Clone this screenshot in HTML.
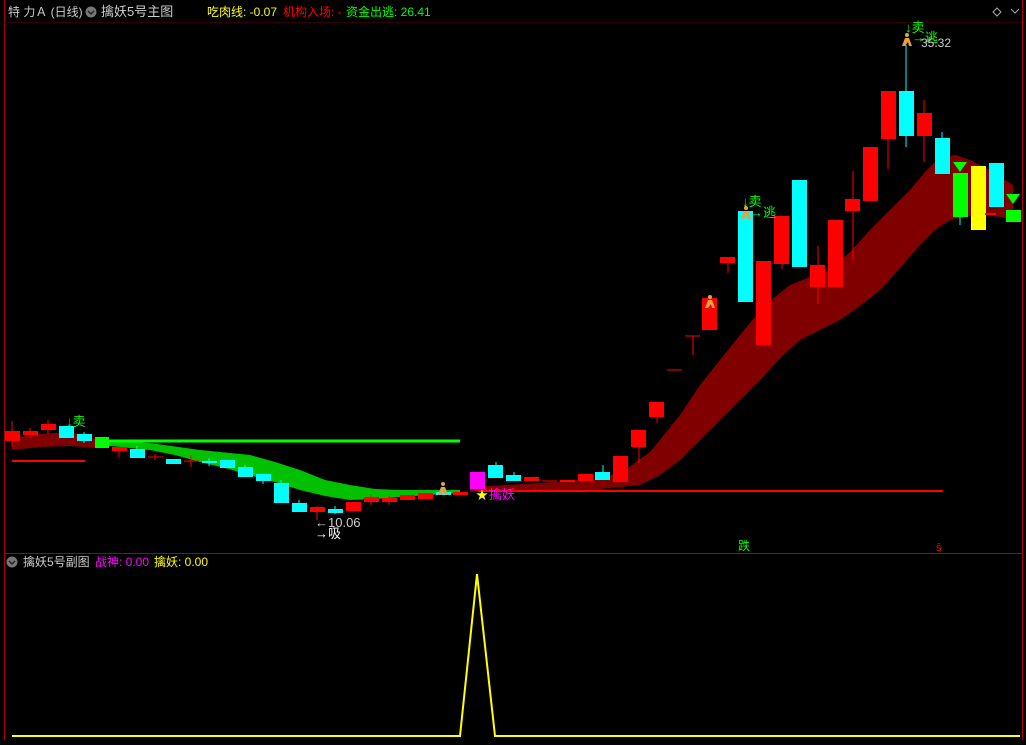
<!DOCTYPE html>
<html><head><meta charset="utf-8"><style>
body{margin:0;background:#000;width:1026px;height:740px;overflow:hidden;font-family:"Liberation Sans","Noto Sans CJK SC",sans-serif;}
svg text{font-family:"Liberation Sans","Noto Sans CJK SC",sans-serif;}
</style></head><body>
<svg width="1026" height="740" viewBox="0 0 1026 740" xmlns="http://www.w3.org/2000/svg">
<rect width="1026" height="740" fill="#000"/>
<line x1="4.5" y1="0" x2="4.5" y2="740" stroke="#a00" />
<line x1="1022.5" y1="0" x2="1022.5" y2="740" stroke="#a00" />
<line x1="4" y1="553.5" x2="1022" y2="553.5" stroke="#a00" />
<line x1="4" y1="22.5" x2="1022" y2="22.5" stroke="#300" />
<text x="8" y="16" fill="#ccc" font-size="12">特 力Ａ (日线)</text>
<circle cx="91" cy="12" r="5.5" fill="#777"/><path d="M88 11l3 3 3-3" stroke="#222" stroke-width="1.5" fill="none"/>
<text x="101" y="16" fill="#ccc" font-size="13">擒妖5号主图</text>
<text x="207" y="16" fill="#ff0" font-size="12">吃肉线: -0.07</text>
<text x="283" y="16" fill="#f00" font-size="12">机构入场: -</text>
<text x="346" y="16" fill="#0f0" font-size="12">资金出逃: 26.41</text>
<path d="M997 8l4 4-4 4-4-4z" stroke="#aaa" fill="none"/>
<path d="M1011 9l4 4 4-4" stroke="#aaa" fill="none"/>
<polygon points="12,438 40,434 70,432 100,440 100,448 70,446 40,447 12,450" fill="#800000"/>
<polygon points="470,487 540,483 600,479 625,470 650,452 680,415 700,385 720,360 740,335 765,305 790,285 810,277 830,270 850,252 870,230 890,210 910,190 925,172 940,157 955,155 970,160 990,170 1013,185 1013,220 995,216 980,215 965,217 950,220 935,230 920,245 900,268 880,290 860,306 840,320 820,330 800,340 780,358 760,380 740,400 720,420 700,440 680,460 660,475 640,485 600,489 540,490 470,492" fill="#800000"/>
<polygon points="100,440 150,443 200,450 250,455 275,462 300,470 325,480 350,485 375,489 400,490 460,490 460,493 400,497 375,499 350,500 325,496 300,490 275,482 250,475 225,468 200,462 175,455 150,450 100,445" fill="#00c000"/>
<line x1="95" y1="441" x2="460" y2="441" stroke="#0f0" stroke-width="3"/>
<line x1="12" y1="461" x2="85" y2="461" stroke="#f00" stroke-width="2"/>
<line x1="478" y1="491" x2="943" y2="491" stroke="#f00" stroke-width="2"/>
<g stroke-width="1">
<line x1="12" y1="421" x2="12" y2="447" stroke="#f00"/><rect x="5" y="431" width="15" height="10" fill="#f00"/>
<rect x="23" y="431" width="15" height="4" fill="#f00"/><line x1="30" y1="428" x2="30" y2="438" stroke="#f00"/>
<line x1="48" y1="420" x2="48" y2="434" stroke="#f00"/><rect x="41" y="424" width="15" height="6" fill="#f00"/>
<rect x="59" y="426" width="15" height="12" fill="#0ff"/>
<line x1="84" y1="432" x2="84" y2="443" stroke="#0ff"/><rect x="77" y="434" width="15" height="7" fill="#0ff"/>
<rect x="95" y="437" width="14" height="11" fill="#0f0"/>
<line x1="119" y1="447" x2="119" y2="457" stroke="#f00"/><rect x="112" y="447" width="15" height="4" fill="#f00"/>
<line x1="137" y1="446" x2="137" y2="458" stroke="#0ff"/><rect x="130" y="449" width="15" height="9" fill="#0ff"/>
<line x1="148" y1="457" x2="163" y2="457" stroke="#f00"/><line x1="155" y1="454" x2="155" y2="460" stroke="#f00"/>
<rect x="166" y="459" width="15" height="5" fill="#0ff"/>
<line x1="184" y1="461" x2="199" y2="461" stroke="#f00"/><line x1="191" y1="455" x2="191" y2="467" stroke="#f00"/>
<rect x="202" y="461" width="15" height="2" fill="#0ff"/><line x1="209" y1="458" x2="209" y2="466" stroke="#0ff"/>
<rect x="220" y="460" width="15" height="8" fill="#0ff"/>
<line x1="245" y1="465" x2="245" y2="477" stroke="#0ff"/><rect x="238" y="467" width="15" height="10" fill="#0ff"/>
<line x1="263" y1="474" x2="263" y2="484" stroke="#0ff"/><rect x="256" y="474" width="15" height="7" fill="#0ff"/>
<line x1="281" y1="480" x2="281" y2="503" stroke="#0ff"/><rect x="274" y="483" width="15" height="20" fill="#0ff"/>
<line x1="299" y1="500" x2="299" y2="512" stroke="#0ff"/><rect x="292" y="503" width="15" height="9" fill="#0ff"/>
<line x1="317" y1="506" x2="317" y2="520" stroke="#f00"/><rect x="310" y="507" width="15" height="5" fill="#f00"/>
<line x1="335" y1="506" x2="335" y2="514" stroke="#0ff"/><rect x="328" y="509" width="15" height="4" fill="#0ff"/>
<rect x="346" y="502" width="15" height="9" fill="#f00"/>
<line x1="371" y1="495" x2="371" y2="505" stroke="#f00"/><rect x="364" y="497" width="15" height="5" fill="#f00"/>
<line x1="389" y1="496" x2="389" y2="505" stroke="#f00"/><rect x="382" y="498" width="15" height="4" fill="#f00"/>
<rect x="400" y="495" width="15" height="5" fill="#f00"/>
<rect x="418" y="493" width="15" height="6" fill="#f00"/>
<rect x="436" y="492" width="15" height="3" fill="#0ff"/>
<rect x="453" y="492" width="15" height="3" fill="#f00"/>
<rect x="470" y="472" width="15" height="17" fill="#f0f"/>
<line x1="496" y1="462" x2="496" y2="478" stroke="#0ff"/><rect x="488" y="465" width="15" height="13" fill="#0ff"/>
<line x1="514" y1="472" x2="514" y2="481" stroke="#0ff"/><rect x="506" y="475" width="15" height="6" fill="#0ff"/>
<rect x="524" y="477" width="15" height="4" fill="#f00"/>
<line x1="542" y1="481" x2="557" y2="481" stroke="#f00"/>
<rect x="560" y="480" width="15" height="2" fill="#f00"/>
<rect x="578" y="474" width="15" height="7" fill="#f00"/>
<line x1="603" y1="465" x2="603" y2="480" stroke="#0ff"/><rect x="595" y="472" width="15" height="8" fill="#0ff"/>
<rect x="613" y="456" width="15" height="26" fill="#f00"/>
<line x1="639" y1="430" x2="639" y2="463" stroke="#f00"/><rect x="631" y="430" width="15" height="17" fill="#f00"/>
<line x1="657" y1="402" x2="657" y2="423" stroke="#f00"/><rect x="649" y="402" width="15" height="15" fill="#f00"/>
<line x1="667" y1="370" x2="682" y2="370" stroke="#f00"/>
<line x1="685" y1="336" x2="700" y2="336" stroke="#f00"/><line x1="693" y1="336" x2="693" y2="355" stroke="#f00"/>
<rect x="702" y="298" width="15" height="32" fill="#f00"/>
<line x1="728" y1="257" x2="728" y2="273" stroke="#f00"/><rect x="720" y="257" width="15" height="6" fill="#f00"/>
<rect x="738" y="211" width="15" height="91" fill="#0ff"/>
<rect x="756" y="261" width="15" height="84" fill="#f00"/>
<line x1="782" y1="216" x2="782" y2="269" stroke="#f00"/><rect x="774" y="216" width="15" height="48" fill="#f00"/>
<rect x="792" y="180" width="15" height="87" fill="#0ff"/>
<line x1="818" y1="246" x2="818" y2="304" stroke="#f00"/><rect x="810" y="265" width="15" height="22" fill="#f00"/>
<rect x="828" y="220" width="15" height="67" fill="#f00"/>
<line x1="853" y1="171" x2="853" y2="260" stroke="#f00"/><rect x="845" y="199" width="15" height="12" fill="#f00"/>
<rect x="863" y="147" width="15" height="54" fill="#f00"/>
<line x1="888" y1="91" x2="888" y2="169" stroke="#f00"/><rect x="881" y="91" width="15" height="48" fill="#f00"/>
<line x1="906" y1="45" x2="906" y2="147" stroke="#0ff"/><rect x="899" y="91" width="15" height="45" fill="#0ff"/>
<line x1="924" y1="100" x2="924" y2="162" stroke="#f00"/><rect x="917" y="113" width="15" height="23" fill="#f00"/>
<line x1="942" y1="132" x2="942" y2="174" stroke="#0ff"/><rect x="935" y="138" width="15" height="36" fill="#0ff"/>
<line x1="960" y1="173" x2="960" y2="225" stroke="#0ff"/><rect x="953" y="173" width="15" height="44" fill="#0f0"/>
<polygon points="953,162 967,162 960,172" fill="#0f0"/>
<rect x="971" y="166" width="15" height="64" fill="#ff0"/>
<rect x="989" y="163" width="15" height="44" fill="#0ff"/>
<line x1="985" y1="214" x2="996" y2="214" stroke="#f00" stroke-width="2"/>
<rect x="1006" y="210" width="15" height="12" fill="#0f0"/>
<polygon points="1006,194 1020,194 1013,204" fill="#0f0"/>
</g>
<text x="66" y="426" fill="#0f0" font-size="13">↓卖</text>
<text x="315" y="527" fill="#ccc" font-size="13">←10.06</text>
<text x="315" y="538" fill="#fff" font-size="13">→吸</text>
<text x="476" y="499" fill="#ff0" font-size="12">★</text><text x="489" y="499" fill="#f0f" font-size="13">擒妖</text>
<text x="742" y="206" fill="#0f0" font-size="13">↓卖</text><text x="750" y="217" fill="#0f0" font-size="13">→逃</text>
<text x="905" y="32" fill="#0f0" font-size="13">↓卖</text><text x="912" y="42" fill="#0f0" font-size="13">→逃</text>
<text x="921" y="47" fill="#ccc" font-size="12">35.32</text>
<g fill="#e8a040">
<circle cx="443" cy="484" r="2"/><path d="M441 487h4l3 8h-3l-1-4-3 4h-3z"/>
<circle cx="710" cy="297" r="2"/><path d="M708 300h4l3 8h-3l-1-4-3 4h-3z"/>
<circle cx="746" cy="208" r="2"/><path d="M744 211h4l3 8h-3l-1-4-3 4h-3z"/>
<circle cx="907" cy="35" r="2"/><path d="M905 38h4l3 8h-3l-1-4-3 4h-3z"/>
</g>
<text x="738" y="550" fill="#0f0" font-size="12">跌</text>
<text x="936" y="551" fill="#f00" font-size="11">ŝ</text>
<circle cx="12" cy="562" r="5.5" fill="#777"/><path d="M9 561l3 3 3-3" stroke="#222" stroke-width="1.5" fill="none"/>
<text x="23" y="566" fill="#ccc" font-size="12">擒妖5号副图</text>
<text x="95" y="566" fill="#f0f" font-size="12">战神: 0.00</text>
<text x="154" y="566" fill="#ff0" font-size="12">擒妖: 0.00</text>
<polyline points="12,736 460,736 477,574 495,736 1020,736" fill="none" stroke="#ff0" stroke-width="2"/>
</svg>
</body></html>
